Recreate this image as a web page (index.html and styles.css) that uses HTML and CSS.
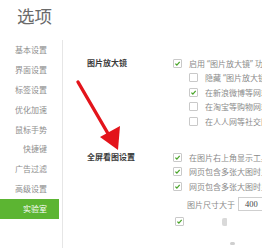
FILE: index.html
```html
<!DOCTYPE html>
<html lang="zh-CN">
<head>
<meta charset="utf-8">
<title>选项</title>
<link rel="stylesheet" href="styles.css">
</head>
<body>
<div class="page">
  <header class="title">选项</header>
  <div class="main">
    <nav class="sidebar">
      <div class="nav-item">基本设置</div>
      <div class="nav-item">界面设置</div>
      <div class="nav-item">标签设置</div>
      <div class="nav-item">优化加速</div>
      <div class="nav-item">鼠标手势</div>
      <div class="nav-item">快捷键</div>
      <div class="nav-item">广告过滤</div>
      <div class="nav-item">高级设置</div>
      <div class="nav-item active">实验室</div>
    </nav>
    <div class="content">
      <section class="section">
        <div class="section-label">图片放大镜</div>
        <div class="options">
          <div class="opt"><span class="cb on"><svg viewBox="0 0 9 9"><path d="M1.8 4.6 L3.7 6.5 L7.3 2.4"/></svg></span><span>启用 “图片放大镜” 功能</span></div>
          <div class="opt sub"><span class="cb"></span><span>隐藏 “图片放大镜” 图标</span></div>
          <div class="opt sub"><span class="cb on"><svg viewBox="0 0 9 9"><path d="M1.8 4.6 L3.7 6.5 L7.3 2.4"/></svg></span><span>在新浪微博等网站使用</span></div>
          <div class="opt sub"><span class="cb"></span><span>在淘宝等购物网站使用</span></div>
          <div class="opt sub"><span class="cb"></span><span>在人人网等社交网站使用</span></div>
        </div>
      </section>
      <section class="section second">
        <div class="section-label">全屏看图设置</div>
        <div class="options">
          <div class="opt"><span class="cb on"><svg viewBox="0 0 9 9"><path d="M1.8 4.6 L3.7 6.5 L7.3 2.4"/></svg></span><span>在图片右上角显示工具栏</span></div>
          <div class="opt"><span class="cb on"><svg viewBox="0 0 9 9"><path d="M1.8 4.6 L3.7 6.5 L7.3 2.4"/></svg></span><span>网页包含多张大图时显示</span></div>
          <div class="opt"><span class="cb on"><svg viewBox="0 0 9 9"><path d="M1.8 4.6 L3.7 6.5 L7.3 2.4"/></svg></span><span>网页包含多张大图时显示</span></div>
          <div class="size-row"><span>图片尺寸大于</span><span class="num-input">400</span></div>
          <div class="opt last"><span class="cb on"><svg viewBox="0 0 9 9"><path d="M1.8 4.6 L3.7 6.5 L7.3 2.4"/></svg></span><span class="blob"></span></div>
          <div class="blob-row"><span class="blob2"></span></div>
        </div>
      </section>
    </div>
  </div>
  <svg class="arrow" width="262" height="248" viewBox="0 0 262 248">
    <path d="M78 82 L110 137" stroke="#e3141b" stroke-width="3.4" stroke-linecap="round" fill="none"/>
    <polygon points="100,137 120,126 118,150" fill="#e3141b"/>
  </svg>
</div>
</body>
</html>
```

FILE: styles.css
```css
* { box-sizing: border-box; }
html, body { margin: 0; padding: 0; background: #fff; }
body {
  font-family: "Noto Sans", "Noto Sans CJK SC", sans-serif;
  width: 262px;
  height: 248px;
  overflow: hidden;
}
.page {
  position: relative;
  width: 262px;
  height: 248px;
}
.title {
  height: 40px;
  padding: 4px 0 0 17px;
  font-family: "Noto Sans CJK SC", sans-serif;
  font-size: 17.5px;
  line-height: 24px;
  color: #6a6a6a;
}
.main {
  display: flex;
  height: 208px;
}
.sidebar {
  width: 63px;
  border-right: 1px solid #e6e6e6;
  padding-right: 3px;
  flex-shrink: 0;
}
.nav-item {
  height: 19.9px;
  line-height: 19.9px;
  font-size: 8px;
  color: #8e8e8e;
  text-align: right;
  padding-right: 12px;
  white-space: nowrap;
}
.nav-item.active {
  background: #5cb532;
  color: #fff;
}
.content {
  flex: 1;
  padding-top: 16px;
  overflow: hidden;
}
.section {
  display: flex;
  align-items: flex-start;
}
.section.second { margin-top: 21.5px; }
.section-label {
  width: 110px;
  flex-shrink: 0;
  padding-left: 24px;
  font-size: 8px;
  line-height: 14.5px;
  color: #3a3a3a;
  font-weight: 600;
  white-space: nowrap;
}
.options {
  display: flex;
  flex-direction: column;
  white-space: nowrap;
}
.opt {
  display: flex;
  align-items: center;
  gap: 7px;
  height: 14.5px;
  font-size: 8px;
  color: #8a8a8a;
}
.opt.sub { padding-left: 16px; }
.opt.last { height: 14.5px; padding-left: 2px; gap: 38px; }
.cb {
  width: 9px;
  height: 9px;
  border: 1px solid #c9c9c9;
  border-radius: 1px;
  background: #fff;
  flex-shrink: 0;
  display: flex;
}
.cb svg { width: 7px; height: 7px; }
.cb svg path {
  fill: none;
  stroke: #4aa52a;
  stroke-width: 1.6;
}
.size-row {
  display: flex;
  align-items: center;
  height: 21px;
  padding-left: 14px;
  gap: 3px;
  font-size: 8px;
  color: #8a8a8a;
}
.num-input {
  height: 14px;
  width: 40px;
  border: 1px solid #cfcfcf;
  padding-left: 6px;
  font-family: "Liberation Serif", serif;
  font-size: 8.5px;
  line-height: 12px;
  color: #444;
}
.blob {
  width: 5px;
  height: 8px;
  background: #d0d0d0;
  border-radius: 2px 1px 1px 2px;
  opacity: 0.8;
}
.blob-row {
  height: 29px;
  padding-left: 57px;
  display: flex;
  align-items: center;
}
.blob2 {
  width: 5px;
  height: 3px;
  background: #cfcfcf;
  border-radius: 2px;
}
.arrow {
  position: absolute;
  left: 0;
  top: 0;
  pointer-events: none;
}
```
